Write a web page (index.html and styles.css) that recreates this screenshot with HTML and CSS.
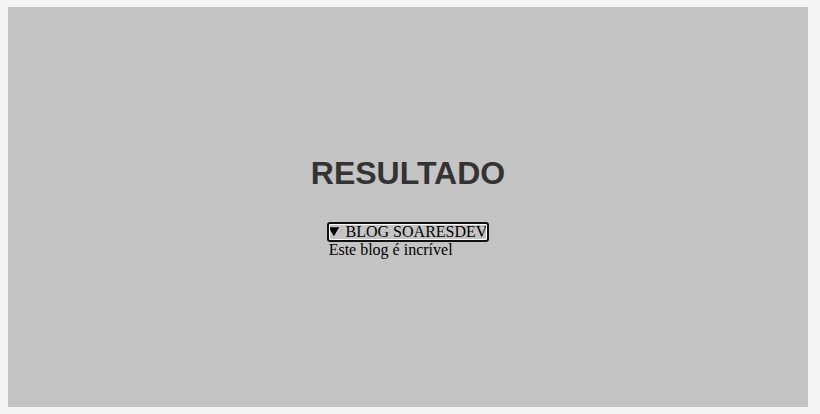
FILE: index.html
```html
<!DOCTYPE html>
<html lang="pt-BR">
<head>
<meta charset="utf-8">
<title>Resultado</title>
<link rel="stylesheet" href="styles.css">
</head>
<body>
<main class="result">
  <h1 class="result-title">RESULTADO</h1>
  <details class="blog" open>
    <summary class="blog-summary">BLOG SOARESDEV</summary>
    <p class="blog-text">Este blog é incrível</p>
  </details>
</main>
</body>
</html>
```
FILE: styles.css
```css
html, body {
  background: #f4f4f4;
}
body {
  margin: 7px 8px;
}
.result {
  width: 800px;
  height: 400px;
  background: #c4c4c4;
  display: flex;
  flex-direction: column;
  align-items: center;
  justify-content: center;
  font-family: "Liberation Serif", serif;
  font-size: 16px;
  color: #000;
}
.result-title {
  margin: 0 0 30px;
  font-family: "Liberation Sans", Arial, sans-serif;
  font-size: 32px;
  font-weight: 700;
  color: #333;
}
.blog {
  display: block;
  padding-top: 1px;
}
.blog-summary {
  position: relative;
  cursor: pointer;
}
.blog-summary::after {
  content: "";
  position: absolute;
  top: -1px;
  bottom: -1px;
  left: -2px;
  right: -2px;
  border: 2px solid #111;
  border-radius: 3px;
  box-shadow: inset 0 0 0 1px #fff;
  pointer-events: none;
}
.blog-text {
  margin: 0;
}
```
